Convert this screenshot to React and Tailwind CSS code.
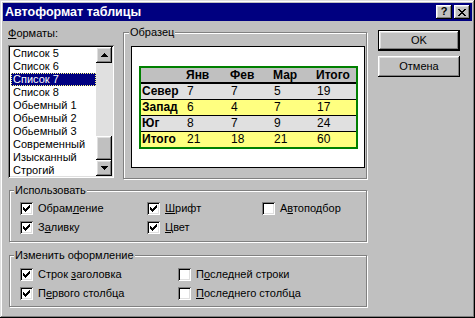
import React from 'react';

const raised = 'shadow-[inset_-1px_-1px_#000,inset_1px_1px_#fff,inset_-2px_-2px_#808080,inset_2px_2px_#dfdfdf]';
const sunken = 'shadow-[inset_1px_1px_#808080,inset_-1px_-1px_#fff,inset_2px_2px_#000,inset_-2px_-2px_#dfdfdf]';

const CheckMark = () => (
  <svg width="7" height="7" viewBox="0 0 7 7" shapeRendering="crispEdges">
    <path
      fill="#000"
      d="M6 0h1v1h-1z M5 1h2v1h-2z M0 2h1v1h-1z M4 2h3v1h-3z M0 3h2v1h-2z M3 3h3v1h-3z M0 4h5v1h-5z M1 5h3v1h-3z M2 6h1v1h-1z"
    />
  </svg>
);

const Check = ({ checked, children }) => (
  <div className="flex items-center h-[13px] gap-[5px]">
    <span className={`w-[13px] h-[13px] bg-white ${sunken} flex items-center justify-center shrink-0`}>
      {checked && <CheckMark />}
    </span>
    <span className="whitespace-nowrap">{children}</span>
  </div>
);

const Arrow = ({ down }) => (
  <svg width="7" height="4" viewBox="0 0 7 4" shapeRendering="crispEdges" className={down ? 'rotate-180' : ''}>
    <path fill="#000" d="M3 0h1v1h-1z M2 1h3v1h-3z M1 2h5v1h-5z M0 3h7v1h-7z" />
  </svg>
);

const Group = ({ title, className, children }) => (
  <fieldset className={`border border-[#808080] shadow-[inset_1px_1px_#fff,1px_1px_#fff] p-0 m-0 min-w-0 ${className}`}>
    <legend className="px-[1px] leading-[11px] bg-[#c0c0c0]">{title}</legend>
    {children}
  </fieldset>
);

const u = (s) => <span className="underline underline-offset-[1px] decoration-1">{s}</span>;

const formats = ['Список 5', 'Список 6', 'Список 7', 'Список 8', 'Обьемный 1', 'Обьемный 2', 'Обьемный 3', 'Современный', 'Изысканный', 'Строгий'];

// dithered fills, shown as their average colour
const grayDither = 'bg-[#e0e0e0]';
const yellowDither = 'bg-[#ffff80]';

const rows = [
  { name: 'Север', v: ['7', '7', '5', '19'], bg: grayDither },
  { name: 'Запад', v: ['6', '4', '7', '17'], bg: yellowDither },
  { name: 'Юг', v: ['8', '7', '9', '24'], bg: grayDither },
  { name: 'Итого', v: ['21', '18', '21', '60'], bg: yellowDither },
];

const cols = 'grid grid-cols-[44px_44px_43px_43px_1fr] pl-[1px]';

export default function App() {
  return (
    <div className="w-[475px] h-[318px] overflow-hidden bg-[#c0c0c0] p-[3px] shadow-[inset_-1px_-1px_#000,inset_1px_1px_#dfdfdf,inset_-2px_-2px_#808080,inset_2px_2px_#fff] font-['Liberation_Sans',Arial,sans-serif] text-[11px] leading-[13px] text-black select-none">
      <div className="h-[18px] bg-[#000080] flex items-center justify-between pl-[2px] pr-[2px]">
        <span className="text-white font-bold text-[12.5px]">Автоформат таблицы</span>
        <div className="flex gap-[2px]">
          <span className={`w-[16px] h-[14px] bg-[#c0c0c0] ${raised} flex items-center justify-center font-bold text-[11px] leading-none pb-[1px]`}>?</span>
          <span className={`w-[16px] h-[14px] bg-[#c0c0c0] ${raised} flex items-center justify-center`}>
            <svg width="8" height="7" viewBox="0 0 8 7" shapeRendering="crispEdges">
              <path fill="#000" d="M0 0h2v1h-2z M6 0h2v1h-2z M1 1h2v1h-2z M5 1h2v1h-2z M2 2h4v1h-4z M3 3h2v1h-2z M2 4h4v1h-4z M1 5h2v1h-2z M5 5h2v1h-2z M0 6h2v1h-2z M6 6h2v1h-2z" />
            </svg>
          </span>
        </div>
      </div>

      <div className="flex pl-[5px]">
        <div className="w-[360px] pt-[6px]">
          <div className="flex items-start">
            <div className="w-[106px]">
              <div className="h-[13px]">{u('Ф')}орматы:</div>
              <div className={`mt-[5px] h-[133px] bg-white ${sunken} p-[2px] flex`}>
                <div className="flex-1 overflow-hidden pl-[1px]">
                  {formats.map((f) => (
                    <div
                      key={f}
                      className={`h-[13px] px-[2px] whitespace-nowrap ${f === 'Список 7' ? 'bg-[#000080] text-white outline-1 outline-dotted outline-[#ffff80] -outline-offset-1' : ''}`}
                    >
                      {f}
                    </div>
                  ))}
                </div>
                <div className="w-[16px] flex flex-col bg-[#e0e0e0]">
                  <div className={`h-[16px] bg-[#c0c0c0] ${raised} flex items-center justify-center`}><Arrow /></div>
                  <div className="flex-1" />
                  <div className={`h-[24px] bg-[#c0c0c0] ${raised}`} />
                  <div className={`h-[16px] bg-[#c0c0c0] ${raised} flex items-center justify-center`}><Arrow down /></div>
                </div>
              </div>
            </div>

            <Group title="Образец" className="ml-[9px] w-[244px] h-[152px] [&>legend]:ml-[5px]">
              <div className="ml-[7px] mt-[8px] w-[234px] h-[122px] bg-white border border-black pl-[7px] pt-[19px]">
                <div className="w-[219px] border-2 border-[#008000] text-[12px] leading-[15px]">
                  <div className={`${cols} h-[16px] bg-[#c0c0c0] font-bold border-b-2 border-black`}>
                    <span />
                    <span>Янв</span>
                    <span>Фев</span>
                    <span>Мар</span>
                    <span>Итого</span>
                  </div>
                  {rows.map((r, i) => (
                    <div key={r.name} className={`${cols} h-[15px] ${r.bg} ${i < 3 ? 'border-b border-black box-content' : ''}`}>
                      <span className="font-bold">{r.name}</span>
                      {r.v.map((n, j) => (
                        <span key={j} className="pl-[1px]">{n}</span>
                      ))}
                    </div>
                  ))}
                </div>
              </div>
            </Group>
          </div>

          <Group title="Использовать" className="mt-[6px] ml-[1px] w-[358px] h-[57px] [&>legend]:ml-[4px]">
            <div className="grid grid-cols-[127px_115px_1fr] gap-y-[6px] pl-[10px] pt-[6px]">
              <Check checked>Обрам{u('л')}ение</Check>
              <Check checked>{u('Ш')}рифт</Check>
              <Check>А{u('в')}топодбор</Check>
              <Check checked>З{u('а')}ливку</Check>
              <Check checked>{u('Ц')}вет</Check>
            </div>
          </Group>

          <Group title="Изменить оформление" className="mt-[8px] ml-[1px] w-[358px] h-[57px] [&>legend]:ml-[4px]">
            <div className="grid grid-cols-[158px_1fr] gap-y-[6px] pl-[10px] pt-[7px]">
              <Check checked>Строк {u('з')}аголовка</Check>
              <Check>П{u('о')}следней строки</Check>
              <Check checked>П{u('е')}рвого столбца</Check>
              <Check>{u('П')}оследнего столбца</Check>
            </div>
          </Group>
        </div>

        <div className="ml-[10px] pt-[9px] flex flex-col gap-[5px]">
          <div className={`w-[82px] h-[21px] bg-[#c0c0c0] border border-black ${raised} flex items-center justify-center`}>OK</div>
          <div className={`w-[82px] h-[21px] bg-[#c0c0c0] ${raised} flex items-center justify-center`}>Отмена</div>
        </div>
      </div>
    </div>
  );
}
